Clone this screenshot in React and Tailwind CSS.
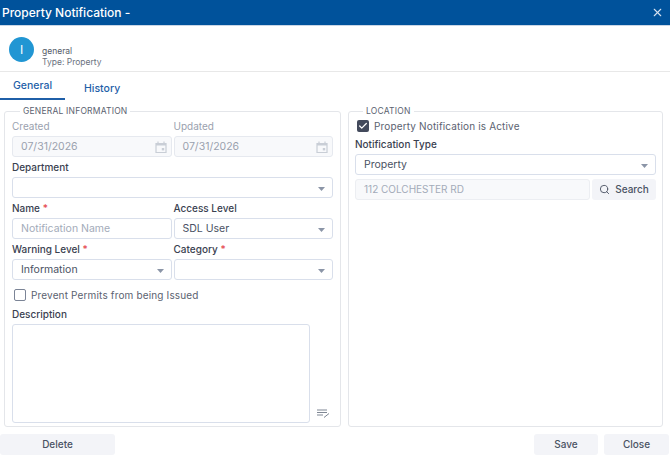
import { Search, X, Check } from 'lucide-react';

function Caret() {
    return (
        <svg width="7" height="4" viewBox="0 0 7 4" className="absolute right-[7px] top-[9px]">
            <path d="M0 0h7L3.5 4z" fill="#8b95a7" />
        </svg>
    );
}

function Calendar() {
    return (
        <svg width="12" height="12" viewBox="0 0 12 12" className="absolute right-[4px] top-[4px]" fill="none">
            <path d="M1 2.5h10v9H1z" stroke="#c9ced6" strokeWidth="1.2" />
            <path d="M1 2h10v2.5H1z" fill="#c9ced6" />
            <path d="M3 .5v2M9 .5v2" stroke="#c9ced6" strokeWidth="1.2" />
            <rect x="6.8" y="7" width="2.4" height="2.4" fill="#c9ced6" />
        </svg>
    );
}

function Label({ children, required }) {
    return (
        <div className="h-[19px] pt-[3px] text-[10px] leading-[13px] font-medium text-[#3a4150]">
            {children}
            {required && <span className="text-[#e5484d]"> *</span>}
        </div>
    );
}

function DateField({ label, value }) {
    return (
        <div className="flex-1">
            <div className="h-[19px] pt-[3px] text-[10px] leading-[13px] text-[#9aa1ae]">{label}</div>
            <div className="relative h-[21px] rounded-[3px] border border-[#e6e9ef] bg-[#f8f9fb] pl-[8px] text-[10.5px] leading-[19px] text-[#9aa1ae]">
                {value}
                <Calendar />
            </div>
        </div>
    );
}

function Select({ value, className = '' }) {
    return (
        <div className={`relative h-[21px] rounded-[3px] border border-[#d9dfeb] bg-white pl-[8px] text-[10.5px] leading-[19px] text-[#4a5263] ${className}`}>
            {value}
            <Caret />
        </div>
    );
}

export default function App() {
    return (
        <div className="flex h-[459px] w-[670px] flex-col overflow-hidden bg-white font-['Inter',sans-serif]">
            <div className="flex h-[26px] items-center justify-between border-b border-[#c9d6e6] bg-[#00529b] pl-[2px] pr-[6px] text-[12px] font-medium text-white">
                <span>Property Notification -</span>
                <X size={13} className="text-[#d5e2f0]" />
            </div>

            <div className="flex h-[46px] items-start border-b border-[#e8e8e8] pl-[9px] pt-[11px]">
                <div className="flex h-[25px] w-[25px] items-center justify-center rounded-full bg-[#2196d3] text-[12px] text-white">I</div>
                <div className="ml-[8px] mt-[9px] text-[8.5px] leading-[11px] text-[#6b7280]">
                    <div className="text-[#555c68]">general</div>
                    <div>Type: Property</div>
                </div>
            </div>

            <div className="flex h-[28px] text-[10.5px] font-medium text-[#1f5fa8]">
                <div className="flex w-[65px] items-center justify-center border-b-2 border-[#1f5fa8] pt-[2px]">General</div>
                <div className="ml-[19px] pt-[9px]">History</div>
            </div>

            <div className="mt-[6px] flex h-[321px] gap-[7px] pl-[4px] pr-[7px]">
                <fieldset className="h-[321px] w-[337px] rounded-[3px] border border-[#e4e6ea] px-[7px]">
                    <legend className="ml-[8px] px-[3px] text-[8.5px] leading-[11px] tracking-[0.2px] text-[#5b6270]">GENERAL INFORMATION</legend>
                    <div className="flex gap-[2px]">
                        <DateField label="Created" value="07/31/2026" />
                        <DateField label="Updated" value="07/31/2026" />
                    </div>
                    <div className="mt-[1px]">
                        <Label>Department</Label>
                        <Select value="" />
                    </div>
                    <div className="mt-[1px] flex gap-[2px]">
                        <div className="flex-1">
                            <Label required>Name</Label>
                            <div className="h-[21px] rounded-[3px] border border-[#d9dfeb] pl-[8px] text-[10.5px] leading-[19px] text-[#a3abb9]">Notification Name</div>
                        </div>
                        <div className="flex-1">
                            <Label>Access Level</Label>
                            <Select value="SDL User" />
                        </div>
                    </div>
                    <div className="mt-[1px] flex gap-[2px]">
                        <div className="flex-1">
                            <Label required>Warning Level</Label>
                            <Select value="Information" />
                        </div>
                        <div className="flex-1">
                            <Label required>Category</Label>
                            <Select value="" />
                        </div>
                    </div>
                    <div className="mt-[9px] flex h-[12px] items-center pl-[2px]">
                        <div className="h-[12px] w-[12px] rounded-[2px] border-[1.5px] border-[#7b8496]" />
                        <span className="ml-[5px] text-[10px] tracking-[0.15px] text-[#5b6270]">Prevent Permits from being Issued</span>
                    </div>
                    <div className="mt-[4px]">
                        <Label>Description</Label>
                        <div className="flex items-end">
                            <div className="h-[99px] w-[298px] rounded-[3px] border border-[#d9dfeb]" />
                            <svg width="13" height="9" viewBox="0 0 13 9" className="mb-[5px] ml-[7px]" fill="none" stroke="#7f8794" strokeWidth="1">
                                <path d="M0 1h10M0 3.5h10M0 6h6M7 8.5l5-4" />
                            </svg>
                        </div>
                    </div>
                </fieldset>

                <fieldset className="h-[321px] w-[315px] rounded-[3px] border border-[#e4e6ea] px-[6px]">
                    <legend className="ml-[8px] px-[3px] text-[8.5px] leading-[11px] tracking-[0.2px] text-[#5b6270]">LOCATION</legend>
                    <div className="mt-[3px] flex h-[12px] items-center pl-[2px]">
                        <div className="flex h-[12px] w-[12px] items-center justify-center rounded-[2px] bg-[#434a5c]">
                            <Check size={10} strokeWidth={3} className="text-white" />
                        </div>
                        <span className="ml-[5px] text-[10px] tracking-[0.15px] text-[#5b6270]">Property Notification is Active</span>
                    </div>
                    <div className="mt-[3px]">
                        <Label>Notification Type</Label>
                        <Select value="Property" />
                    </div>
                    <div className="mt-[4px] flex gap-[2px]">
                        <div className="h-[21px] flex-1 rounded-[3px] border border-[#eceef2] bg-[#f8f9fb] pl-[8px] text-[10px] leading-[19px] text-[#a3abb9]">112 COLCHESTER RD</div>
                        <div className="flex h-[21px] w-[64px] items-center justify-center gap-[5px] rounded-[3px] bg-[#f3f4f8] text-[10px] font-medium text-[#4a5263]">
                            <Search size={11} strokeWidth={2} />
                            Search
                        </div>
                    </div>
                </fieldset>
            </div>

            <div className="mt-[7px] flex pr-[1px] text-[10px] font-medium text-[#4a5263]">
                <div className="flex h-[21px] w-[115px] items-center justify-center rounded-[3px] bg-[#f3f4f8]">Delete</div>
                <div className="ml-auto flex h-[21px] w-[64px] items-center justify-center rounded-[3px] bg-[#f3f4f8]">Save</div>
                <div className="ml-[6px] flex h-[21px] w-[65px] items-center justify-center rounded-[3px] bg-[#f3f4f8]">Close</div>
            </div>
        </div>
    );
}
